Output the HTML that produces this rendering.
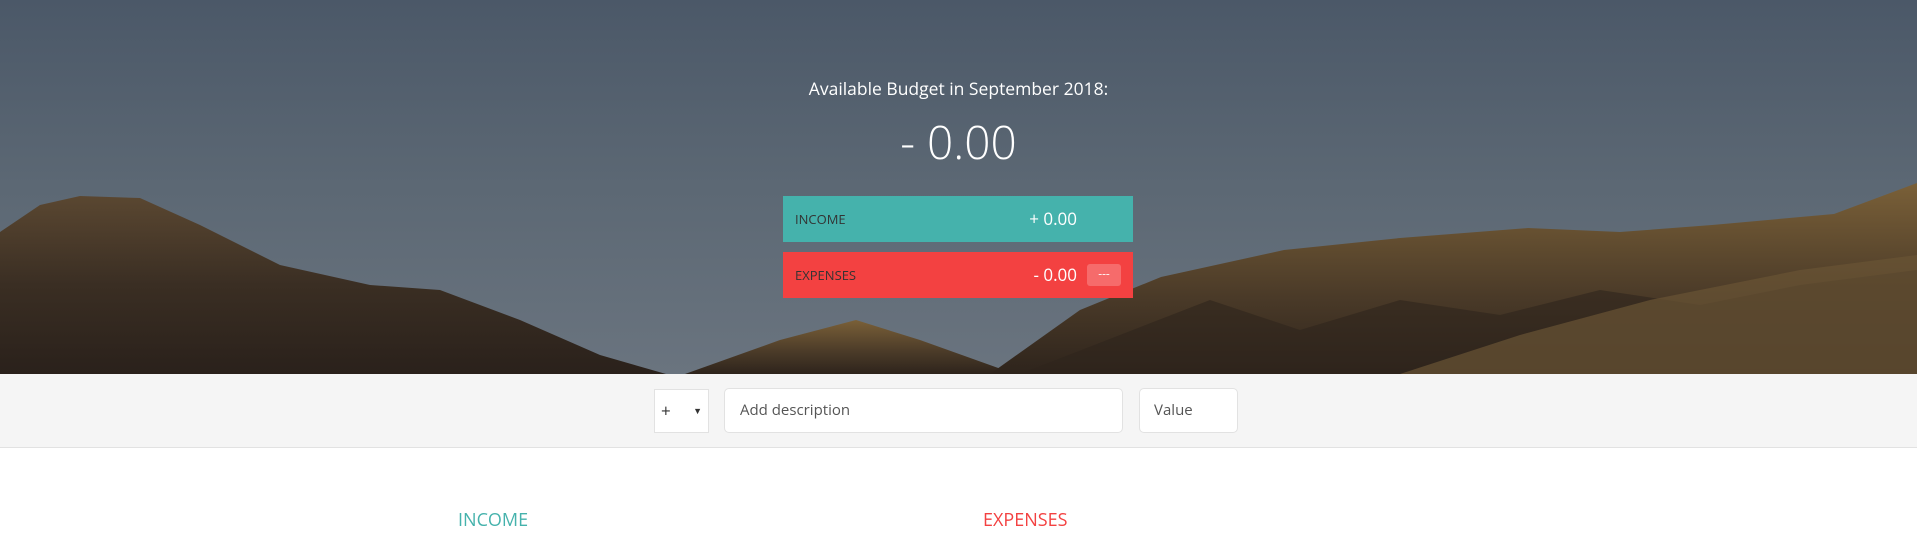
<!DOCTYPE html>
<html><head><meta charset="utf-8"><style>
*{margin:0;padding:0;box-sizing:border-box}
body{width:1917px;height:560px;overflow:hidden;background:#fff;font-family:"Open Sans","Liberation Sans",sans-serif;position:relative}
.hero{position:absolute;left:0;top:0;width:1917px;height:374px;background:linear-gradient(180deg,#4b5868 0%,#5c6874 50%,#6a747f 100%);overflow:hidden}
.hero svg{position:absolute;left:0;top:0}
.t{position:absolute;color:#fff;text-align:center;width:1917px;left:0}
.box{position:absolute;left:783px;width:350px;height:46px}
.lab{position:absolute;left:12px;top:0;line-height:46px;font-size:13px;color:#333;text-transform:uppercase}
.val{position:absolute;right:56px;top:0;line-height:46px;font-size:17px;color:#fff}
.band{position:absolute;left:0;top:374px;width:1917px;height:74px;background:#f5f5f5;border-bottom:1px solid #e2e2e2}
.inp{position:absolute;background:#fff;border:1px solid #e2e2e2;border-radius:5px;font-size:15px;color:#555;line-height:42px}
</style></head><body>
<div class="hero">
<svg width="1917" height="374" viewBox="0 0 1917 374">
<defs>
<linearGradient id="l" x1="0" y1="0" x2="0" y2="1"><stop offset="0" stop-color="#5a4731"/><stop offset=".5" stop-color="#3a2e23"/><stop offset="1" stop-color="#2a211b"/></linearGradient>
<linearGradient id="h" x1="0" y1="0" x2="0" y2="1"><stop offset="0" stop-color="#7a6038"/><stop offset=".6" stop-color="#4a3a28"/><stop offset="1" stop-color="#2e241c"/></linearGradient>
</defs>
<path d="M0 232 L40 205 L80 196 L140 198 L200 225 L280 265 L370 285 L440 290 L520 320 L600 355 L666 374 L0 374Z" fill="url(#l)"/>
<path d="M685 374 L780 340 L856 320 L920 340 L1015 374Z" fill="url(#h)"/>
<path d="M990 374 L1080 310 L1161 277 L1284 250 L1400 238 L1528 228 L1620 232 L1712 225 L1834 214 L1917 183 L1917 374Z" fill="url(#h)"/>
<path d="M1020 374 L1120 335 L1210 300 L1300 330 L1400 300 L1500 315 L1600 290 L1700 305 L1800 285 L1917 270 L1917 374Z" fill="#2e241c" opacity=".6"/>
<path d="M1400 374 L1520 335 L1650 300 L1800 270 L1917 255 L1917 374Z" fill="#6a5434" opacity=".7"/>
</svg>
<div class="t" style="top:77px;font-size:17.5px">Available Budget in September 2018:</div>
<div class="t" style="top:112px;font-size:46px;font-weight:300;line-height:60px">- 0.00</div>
<div class="box" style="top:196px;background:#45b2ac"><span class="lab">Income</span><span class="val">+ 0.00</span></div>
<div class="box" style="top:252px;background:#f34141"><span class="lab">Expenses</span><span class="val">- 0.00</span>
<span style="position:absolute;right:12px;top:12px;width:34px;height:22px;background:#f66b6b;border-radius:3px;color:#fff;font-size:12px;text-align:center;line-height:20px">---</span></div>
</div>
<div class="band">
<div class="inp" style="left:654px;top:15px;width:55px;height:44px;border-radius:0"><span style="position:absolute;left:6px;top:0;font-size:17px;color:#333">+</span><span style="position:absolute;right:6px;top:0;font-size:9px;color:#333">▼</span></div>
<div class="inp" style="left:724px;top:14px;width:399px;height:45px;padding-left:15px">Add description</div>
<div class="inp" style="left:1139px;top:14px;width:99px;height:45px;padding-left:14px">Value</div>
</div>
<div style="position:absolute;left:458px;top:508px;font-size:18px;color:#45b2ac">INCOME</div>
<div style="position:absolute;left:983px;top:508px;font-size:18px;color:#f34141">EXPENSES</div>
</body></html>
